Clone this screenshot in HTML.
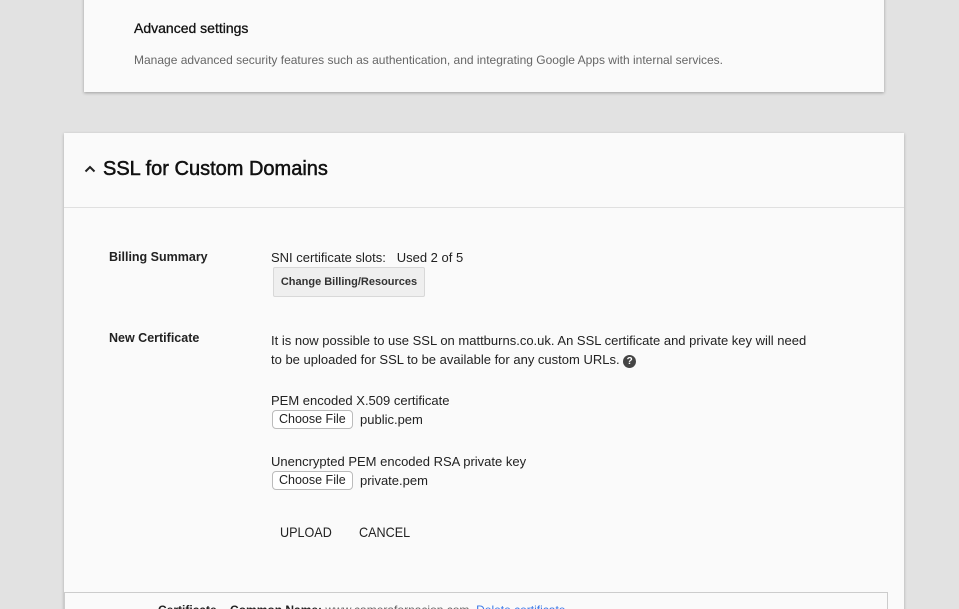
<!DOCTYPE html>
<html><head><style>
html,body{margin:0;width:959px;height:609px;overflow:hidden}
body{background:#e2e2e2;font-family:"Liberation Sans",sans-serif;position:relative;color:#222}
.a{position:absolute}
.card1{left:84px;top:-5px;width:800px;height:97px;background:#fafafa;box-shadow:0 1px 3px rgba(0,0,0,.3)}
.card2{left:64px;top:133px;width:840px;height:490px;background:#fafafa;box-shadow:0 1px 3px rgba(0,0,0,.25)}
.t{font-size:13px;color:#222}
.b{font-weight:bold;font-size:12.5px}
.fb{border:1px solid #bbb;border-radius:4px;background:#fff;font-size:12.5px;padding:1px 6px;height:15px;line-height:15px}
</style></head><body>
<div class="a card1"></div>
<div class="a" style="left:134px;top:20px;font-size:14px;color:#111;-webkit-text-stroke:0.3px #111">Advanced settings</div>
<div class="a" style="left:134px;top:53px;font-size:12px;color:#666">Manage advanced security features such as authentication, and integrating Google Apps with internal services.</div>
<div class="a card2"></div>
<svg class="a" style="left:83px;top:163px" width="14" height="12"><path d="M2.5 8.5 L7 4 L11.5 8.5" fill="none" stroke="#222" stroke-width="2"/></svg>
<div class="a" style="left:103px;top:158px;font-size:20px;color:#111;-webkit-text-stroke:0.5px #111">SSL for Custom Domains</div>
<div class="a" style="left:64px;top:207px;width:840px;height:1px;background:#e0e0e0"></div>
<div class="a b" style="left:109px;top:250px">Billing Summary</div>
<div class="a t" style="left:271px;top:250px">SNI certificate slots:&nbsp;&nbsp;&nbsp;Used 2 of 5</div>
<div class="a" style="left:273px;top:267px;width:150px;height:28px;background:#efefef;border:1px solid #d8d8d8;border-radius:2px;font-size:11px;font-weight:bold;line-height:28px;text-align:center;color:#333">Change Billing/Resources</div>
<div class="a b" style="left:109px;top:331px">New Certificate</div>
<div class="a t" style="left:271px;top:331px;line-height:19px">It is now possible to use SSL on mattburns.co.uk. An SSL certificate and private key will need<br>to be uploaded for SSL to be available for any custom URLs. <span style="display:inline-block;width:13px;height:13px;border-radius:50%;background:#444;color:#fff;font-size:10px;font-weight:bold;text-align:center;line-height:13px;vertical-align:0px">?</span></div>
<div class="a t" style="left:271px;top:393px">PEM encoded X.509 certificate</div>
<div class="a fb" style="left:272px;top:410px">Choose File</div>
<div class="a t" style="left:360px;top:412px">public.pem</div>
<div class="a t" style="left:271px;top:454px">Unencrypted PEM encoded RSA private key</div>
<div class="a fb" style="left:272px;top:471px">Choose File</div>
<div class="a t" style="left:360px;top:473px">private.pem</div>
<div class="a" style="left:280px;top:524px;font-size:14px;color:#222;transform:scaleX(0.9);transform-origin:left">UPLOAD</div>
<div class="a" style="left:359px;top:524px;font-size:14px;color:#222;transform:scaleX(0.9);transform-origin:left">CANCEL</div>
<div class="a" style="left:64px;top:592px;width:822px;height:30px;border-top:1px solid #ccc;border-right:1px solid #ccc;border-left:1px solid #ccc;background:#fafafa"></div>
<div class="a" style="left:158px;top:603px;font-size:12px;font-weight:bold;color:#222">Certificate&nbsp;&nbsp;&nbsp;&nbsp;Common Name: <span style="font-weight:normal;color:#666">www.camerafornacion.com</span>&nbsp;&nbsp;<span style="font-weight:normal;color:#3b78e7">Delete certificate</span></div>
</body></html>
